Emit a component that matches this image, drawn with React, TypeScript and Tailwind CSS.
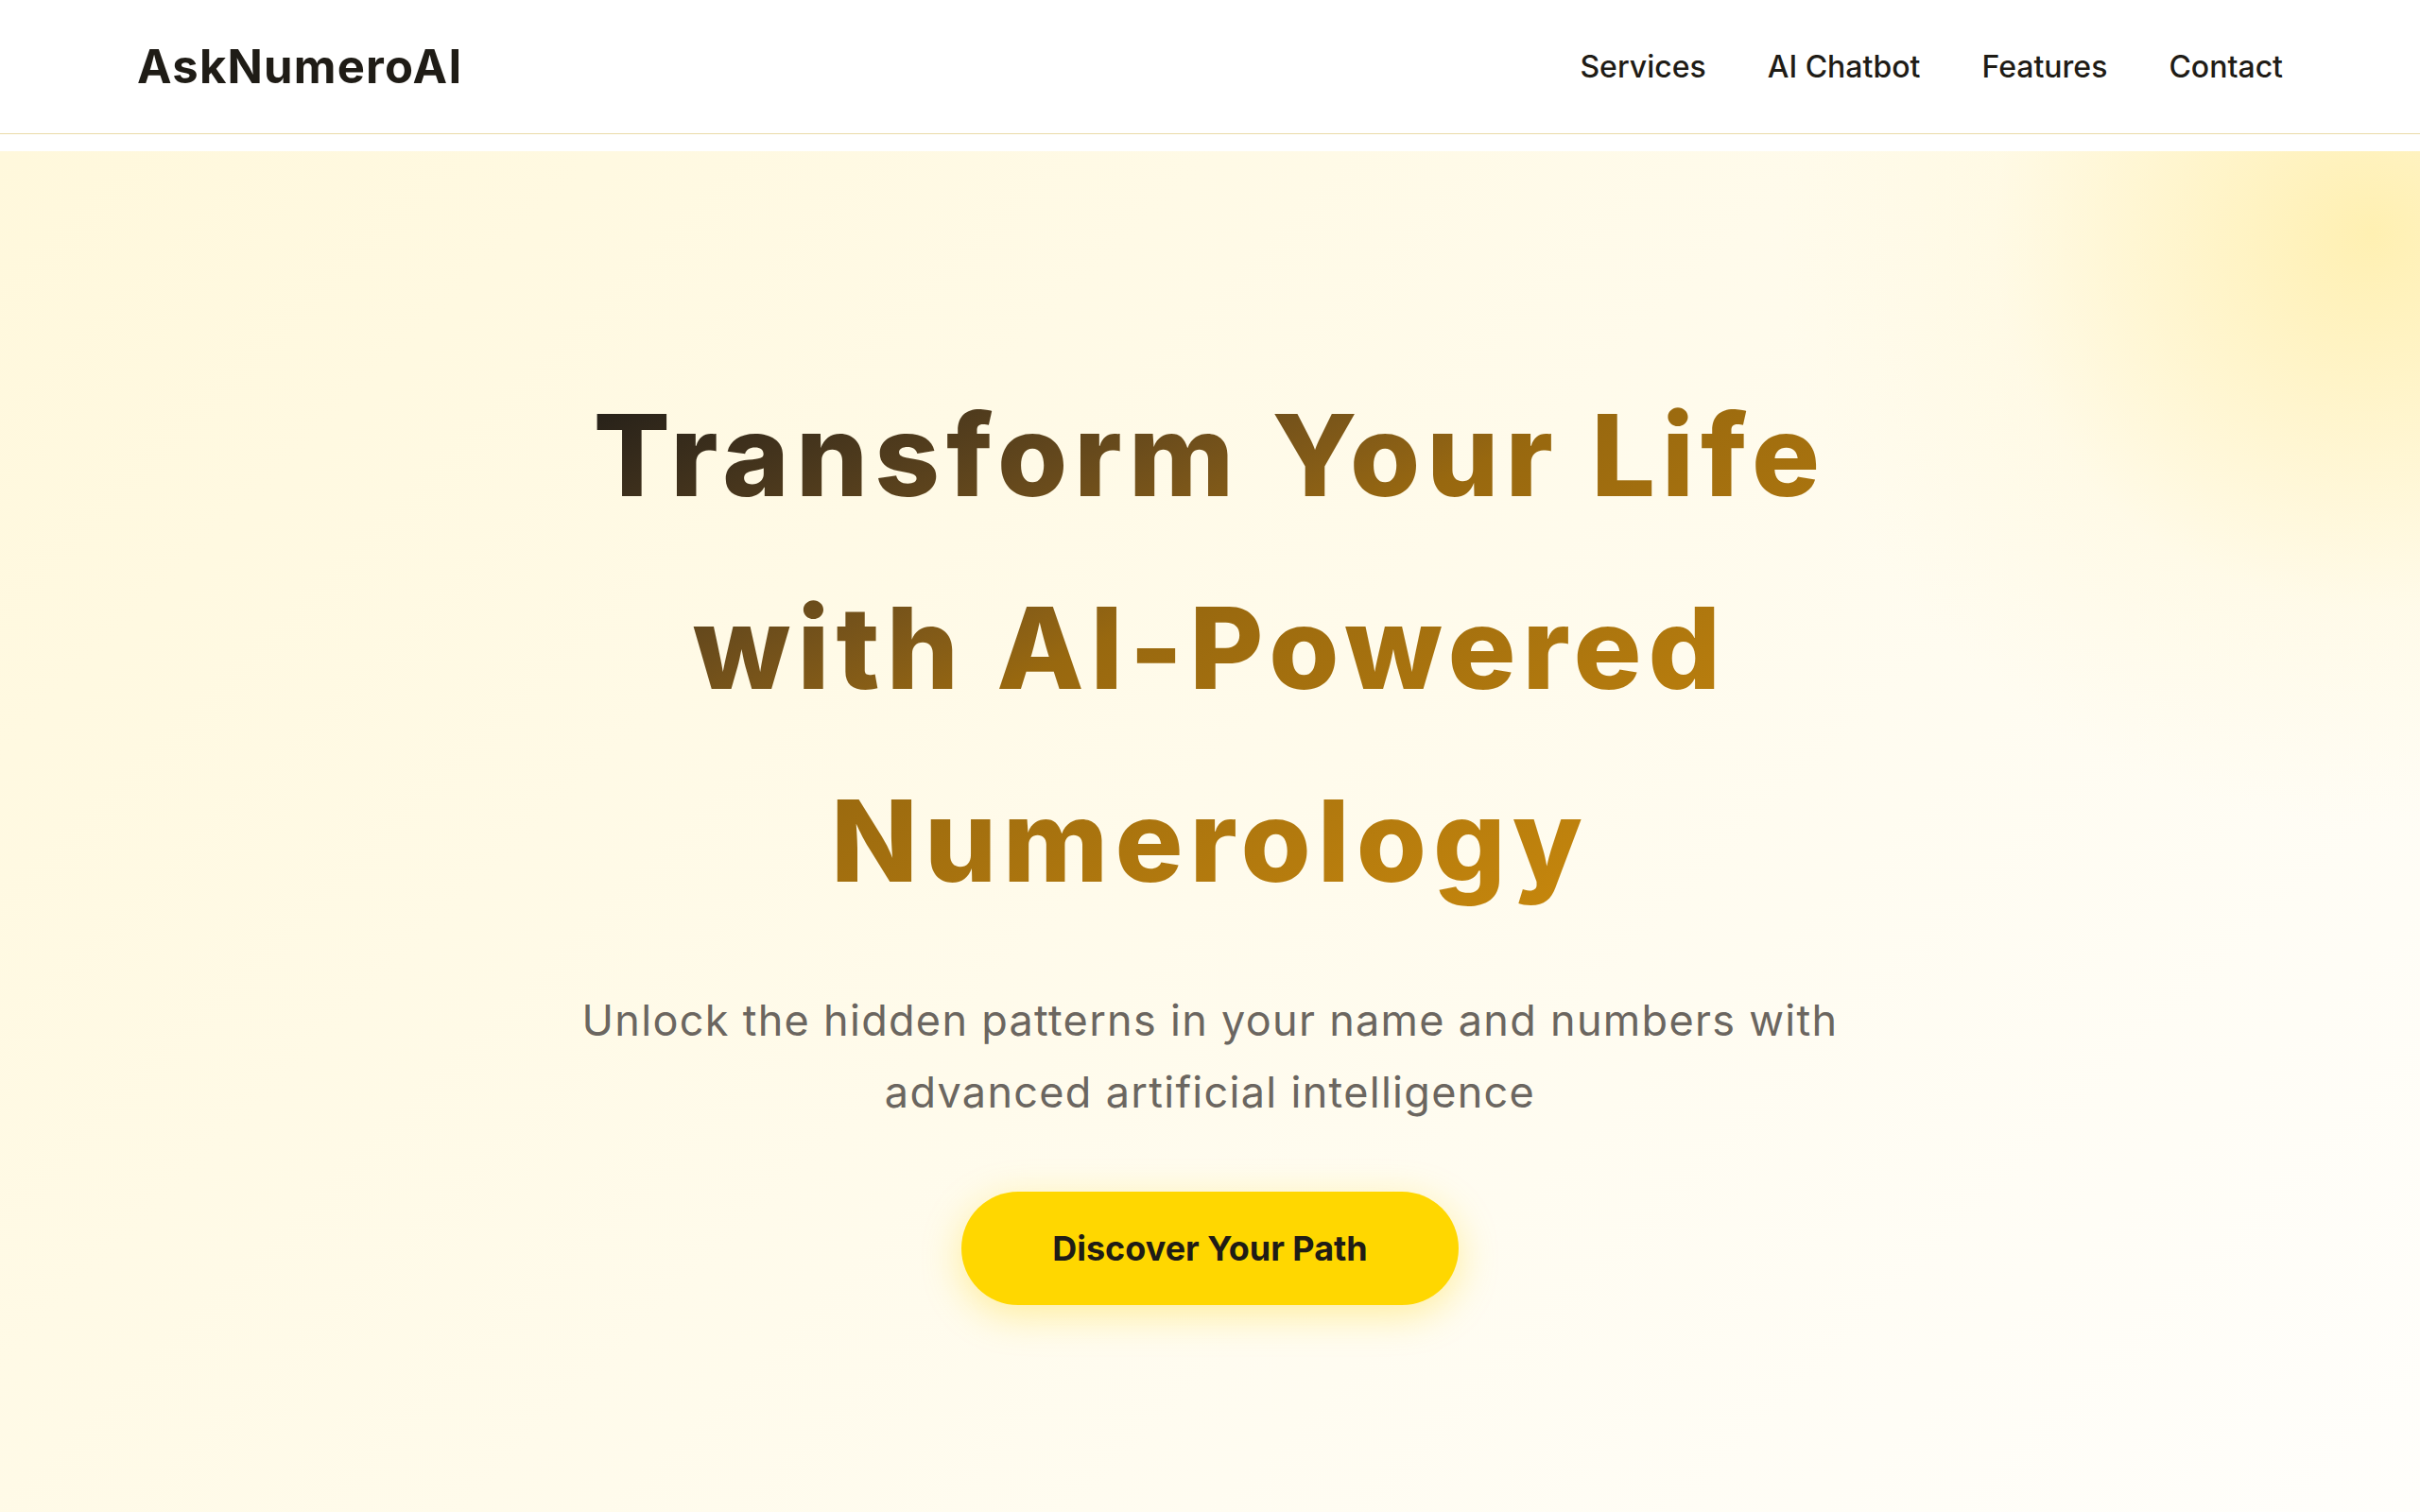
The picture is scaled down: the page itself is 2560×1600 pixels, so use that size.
import React from 'react';

const NAV_LINKS = ['Services', 'AI Chatbot', 'Features', 'Contact'];

const Header: React.FC = () => {
  return (
    <header className="fixed top-0 left-0 right-0 z-10 h-[142px] bg-white border-b border-[#eadba8]">
      <div className="h-full px-[145px] flex items-center justify-between">
        <div className="text-[49px] font-bold tracking-[1.2px] text-[#1f1c16] leading-none">AskNumeroAI</div>
        <nav className="flex items-center gap-[65px]">
          {NAV_LINKS.map((link) => (
            <a key={link} href="#" className="text-[32px] font-medium text-[#1f1c16] leading-none">
              {link}
            </a>
          ))}
        </nav>
      </div>
    </header>
  );
};

const Hero: React.FC = () => {
  return (
    <section className="h-full flex flex-col items-center justify-center text-center bg-[radial-gradient(circle_at_98%_6%,rgba(255,240,178,1)_0%,rgba(255,242,190,0.7)_7%,rgba(255,246,210,0.3)_14%,rgba(255,248,220,0)_22%),linear-gradient(135deg,#fff8dc_0%,#fffefb_100%)]">
      <h1 className="inline-block text-[120px] font-extrabold leading-[1.7] tracking-[7px] bg-linear-to-br from-[#1c1a17] via-[#98680f] via-45% to-[#d4900a] bg-clip-text text-transparent">
        Transform Your Life
        <br />
        with AI-Powered
        <br />
        Numerology
      </h1>
      <p className="mt-[50px] text-[45px] leading-[1.7] tracking-[1.3px] text-[#6b6660]">
        Unlock the hidden patterns in your name and numbers with
        <br />
        advanced artificial intelligence
      </p>
      <button className="mt-[66px] h-[120px] px-[96px] rounded-full bg-[#ffd700] text-[36px] font-bold text-[#1f1c16] shadow-[0_10px_40px_rgba(255,215,0,0.35)]">
        Discover Your Path
      </button>
    </section>
  );
};

export default function App() {
  return (
    <div className="h-screen overflow-hidden bg-white pt-[160px] font-['Inter','Liberation_Sans',sans-serif]">
      <Header />
      <Hero />
    </div>
  );
}
